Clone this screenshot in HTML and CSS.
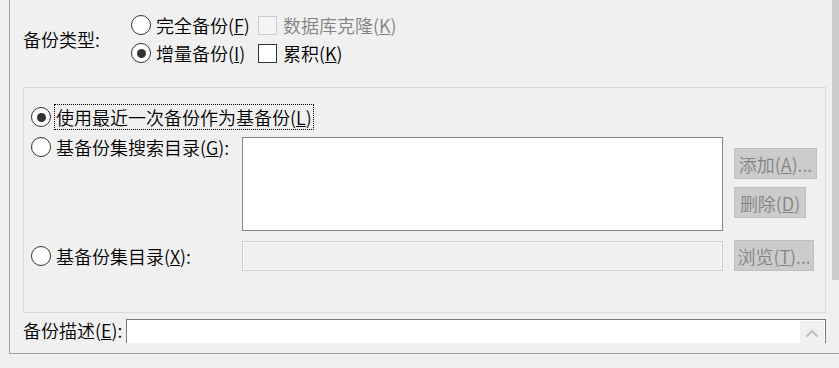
FILE: index.html
```html
<!DOCTYPE html>
<html lang="zh-CN">
<head>
<meta charset="utf-8">
<title>备份选项</title>
<link rel="stylesheet" href="styles.css">
</head>
<body>
<div class="window">
  <div class="frame">
    <div class="scrollarea">
      <div class="viewport">
        <div class="content">
          <div class="type-section">
            <div class="type-label">备份类型:</div>
            <label class="radio"><span class="radio-circle"></span><span class="txt">完全备份(<u>F</u>)</span></label>
            <label class="check disabled"><span class="box"></span><span class="txt">数据库克隆(<u>K</u>)</span></label>
            <label class="radio checked"><span class="radio-circle"></span><span class="txt">增量备份(<u>I</u>)</span></label>
            <label class="check"><span class="box"></span><span class="txt">累积(<u>K</u>)</span></label>
          </div>

          <div class="group">
            <div class="row-a">
              <label class="radio checked"><span class="radio-circle"></span><span class="txt focus">使用最近一次备份作为基备份(<u>L</u>)</span></label>
            </div>
            <div class="row-b">
              <div class="opt-col">
                <label class="radio"><span class="radio-circle"></span><span class="txt">基备份集搜索目录(<u>G</u>):</span></label>
              </div>
              <div class="listbox"></div>
              <div class="btn-col">
                <div class="btn btn-add">添加(<u>A</u>)...</div>
                <div class="btn btn-del">删除(<u>D</u>)</div>
              </div>
            </div>
            <div class="row-c">
              <div class="opt-col">
                <label class="radio"><span class="radio-circle"></span><span class="txt">基备份集目录(<u>X</u>):</span></label>
              </div>
              <div class="path-input"></div>
              <div class="btn btn-browse">浏览(<u>T</u>)...</div>
            </div>
          </div>

          <div class="desc-row">
            <span class="desc-label">备份描述(<u>E</u>):</span>
            <div class="desc-input">
              <div class="desc-scroll">
                <svg width="14" height="9" viewBox="0 0 14 9"><path d="M1.5 7.5 L7 2 L12.5 7.5" fill="none" stroke="#c2c2c2" stroke-width="2.4"/></svg>
              </div>
            </div>
          </div>
        </div>
      </div>
      <div class="vscroll"><div class="thumb"></div></div>
    </div>
  </div>
</div>
</body>
</html>
```

FILE: styles.css
```css
html, body {
  margin: 0;
  padding: 0;
  background: #f0f0f0;
}
body {
  font-family: "Noto Sans CJK SC", "Noto Sans", sans-serif;
  font-size: 18px;
  font-weight: 350;
  line-height: 22px;
  color: #000;
  width: 839px;
  height: 368px;
  overflow: hidden;
}
u {
  text-decoration: underline;
  text-underline-offset: 1px;
  text-decoration-thickness: 1px;
}
.window {
  width: 839px;
  height: 368px;
}
.frame {
  margin-left: 9px;
  border-left: 1px solid #a0a0a0;
  border-bottom: 1px solid #a0a0a0;
  height: 354px;
  box-sizing: border-box;
}
.scrollarea {
  display: flex;
  height: 343px;
}
.viewport {
  flex: 1;
  height: 343px;
  overflow: hidden;
}
.content {
  padding-left: 13px;
}
.vscroll {
  width: 7px;
  height: 343px;
  background: #f0f0f0;
}
.thumb {
  height: 280px;
  background: #cdcdcd;
}

/* type section */
.type-section {
  display: grid;
  grid-template-columns: 108px 127px auto;
  grid-template-rows: 28px 28px;
  padding-top: 11px;
}
.type-label {
  grid-row: 1 / 3;
  grid-column: 1;
  align-self: center;
}
.radio, .check {
  display: flex;
  align-items: center;
  gap: 5px;
  white-space: nowrap;
}
.radio-circle {
  width: 20px;
  height: 20px;
  box-sizing: border-box;
  border: 1.5px solid #333;
  border-radius: 50%;
  background: #fff;
  display: flex;
  align-items: center;
  justify-content: center;
  flex: none;
}
.radio.checked .radio-circle::after {
  content: "";
  width: 9px;
  height: 9px;
  border-radius: 50%;
  background: #333;
}
.box {
  width: 19px;
  height: 19px;
  box-sizing: border-box;
  border: 1.5px solid #333;
  background: #fff;
  flex: none;
}
.check {
  gap: 6px;
}
.check.disabled .box {
  border-color: #cccccc;
  background: #f4f4f4;
}
.check.disabled .txt {
  color: #838383;
}
.focus {
  outline: 1px dotted #000;
  outline-offset: 0;
  padding: 1px 1px;
  margin-left: -1px;
}

/* group box */
.group {
  margin-top: 20px;
  width: 803px;
  box-sizing: border-box;
  border: 1px solid #d9d9d9;
  padding: 17px 0 41px 7px;
}
.row-a {
  height: 24px;
  display: flex;
  align-items: center;
}
.row-b {
  margin-top: 8px;
  display: flex;
  align-items: flex-start;
}
.opt-col {
  width: 211px;
  flex: none;
}
.row-b .radio {
  height: 20px;
}
.listbox {
  width: 481px;
  height: 94px;
  box-sizing: border-box;
  border: 1px solid #828790;
  background: #fff;
  flex: none;
}
.btn-col {
  margin-left: 11px;
  padding-top: 11px;
  display: flex;
  flex-direction: column;
  gap: 8px;
}
.btn {
  height: 31px;
  box-sizing: border-box;
  border: 1px solid #bfbfbf;
  background: #cccccc;
  color: #838383;
  display: flex;
  align-items: center;
  justify-content: center;
  white-space: nowrap;
}
.btn-add { width: 83px; }
.btn-del { width: 72px; }
.btn-browse { width: 80px; margin-left: 11px; }

.row-c {
  margin-top: 9px;
  height: 31px;
  display: flex;
  align-items: center;
}
.path-input {
  width: 481px;
  height: 30px;
  box-sizing: border-box;
  border: 1px solid #cccccc;
  box-shadow: inset 0 0 0 1px #f8f8f8;
  background: #f0f0f0;
  flex: none;
}

/* description */
.desc-row {
  margin-top: 6px;
  display: flex;
  align-items: flex-start;
}
.desc-label {
  width: 103px;
  flex: none;
  white-space: nowrap;
}
.desc-input {
  width: 700px;
  height: 30px;
  box-sizing: border-box;
  border: 1px solid #7a7a7a;
  background: #fff;
  display: flex;
  justify-content: flex-end;
  padding: 1px 1px 0 0;
}
.desc-scroll {
  width: 24px;
  height: 26px;
  background: #f0f0f0;
  display: flex;
  justify-content: center;
  padding-top: 8px;
  box-sizing: border-box;
}
```
